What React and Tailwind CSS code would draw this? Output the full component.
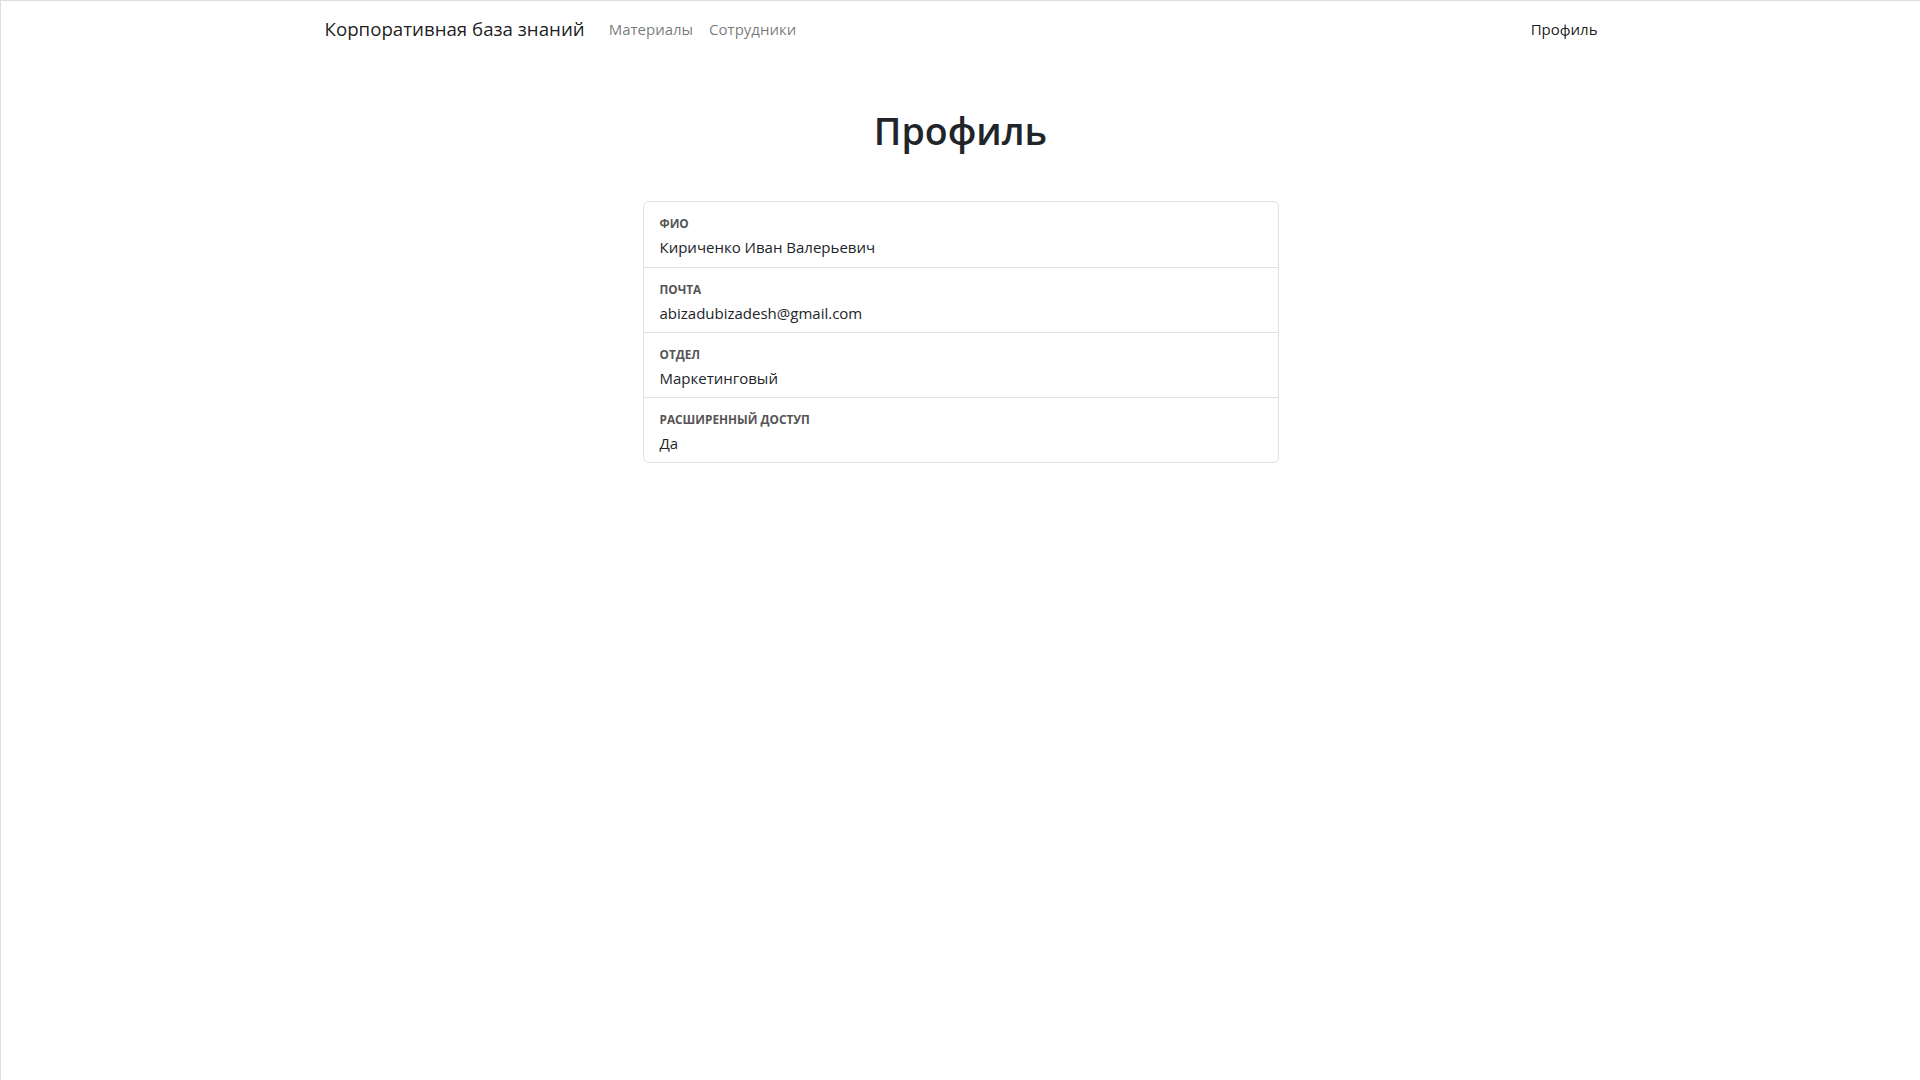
import React from 'react';

const fields = [
  { label: 'ФИО', value: 'Кириченко Иван Валерьевич' },
  { label: 'Почта', value: 'abizadubizadesh@gmail.com' },
  { label: 'Отдел', value: 'Маркетинговый' },
  { label: 'Расширенный доступ', value: 'Да' },
];

export default function App() {
  return (
    <div
      className="min-h-screen bg-white border-t border-l border-[#dedede] text-[#212529]"
      style={{ fontFamily: '"Open Sans", "Noto Sans", sans-serif' }}
    >
      <nav className="h-[56px] flex items-center">
        <div className="w-[1296px] mx-auto pl-[12px] pr-[11px] flex items-center">
          <a className="text-[18.7px] text-black/90 mr-[24px] mt-[1px]">Корпоративная база знаний</a>
          <a className="text-[15px] text-black/55 mr-[16px]">Материалы</a>
          <a className="text-[15px] text-black/55">Сотрудники</a>
          <a className="ml-auto text-[15px] text-black/90">Профиль</a>
        </div>
      </nav>

      <main className="w-[1296px] mx-auto">
        <h1 className="text-center text-[37.5px] font-semibold leading-[1.2] mt-[51px] mb-[48px]">Профиль</h1>

        <div className="w-[636px] mx-auto border border-[#dee2e6] rounded-[6px]">
          {fields.map((f, i) => (
            <div
              key={f.label}
              className={`px-[16px] pt-[12px] pb-[8px] h-[65px] ${i > 0 ? 'border-t border-[#dee2e6]' : ''}`}
            >
              <div className="text-[11.8px] font-bold uppercase text-[#555] leading-[18px]">{f.label}</div>
              <div className="text-[15px] leading-[24px] mt-[3px]">{f.value}</div>
            </div>
          ))}
        </div>
      </main>
    </div>
  );
}
